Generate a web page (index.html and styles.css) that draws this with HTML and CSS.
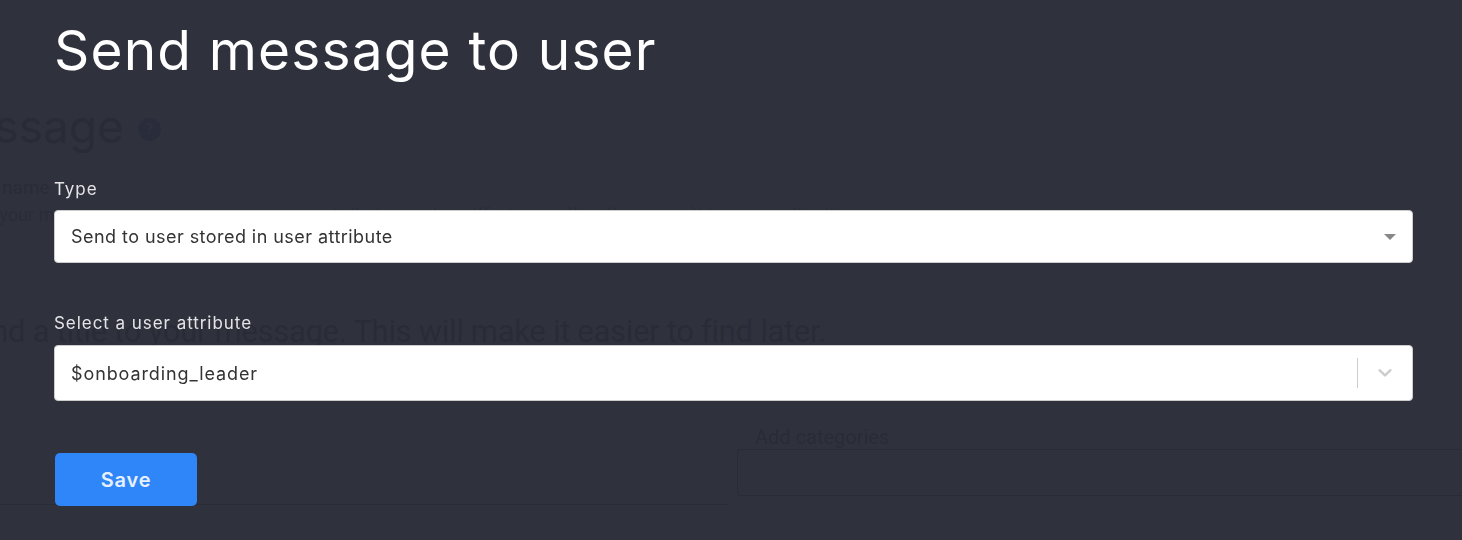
FILE: index.html
```html
<!DOCTYPE html>
<html>
<head>
    <title>Send message to user</title>
    <link rel="stylesheet" href="styles.css">
</head>
<body>
    <div class="page">
        <h2 class="page-title">Message <span class="help-dot">?</span></h2>
        <div class="page-label">Message name</div>
        <div class="page-help">Give your message a name, you can use user attributes such as {{first_name}} or {{company}} to personalise it</div>
        <div class="page-sub">Append a title to your message. This will make it easier to find later.</div>
        <div class="page-columns">
            <div class="page-left"></div>
            <div class="page-right">
                <div class="page-right-label">Add categories</div>
                <div class="page-right-box"></div>
            </div>
        </div>
    </div>

    <div class="modal">
        <div class="dialog">
            <h1>Send message to user</h1>

            <div class="field first">
                <label>Type</label>
                <div class="select">
                    <span class="select-value">Send to user stored in user attribute</span>
                    <span class="caret"></span>
                </div>
            </div>

            <div class="field">
                <label>Select a user attribute</label>
                <div class="select tall">
                    <span class="select-value">$onboarding_leader</span>
                    <span class="indicators">
                        <span class="separator"></span>
                        <svg class="chevron" width="20" height="20" viewBox="0 0 20 20">
                            <path d="M4.5 7.2 L10 12.4 L15.5 7.2" fill="none" stroke="#cccccc" stroke-width="2.4" stroke-linecap="round" stroke-linejoin="round"/>
                        </svg>
                    </span>
                </div>
            </div>

            <button class="save">Save</button>
        </div>
    </div>
</body>
</html>
```

FILE: styles.css
```css
body {
    margin: 0;
    background-color: #ffffff;
    font-family: Inter, "Noto Sans", sans-serif;
    overflow: hidden;
    height: 540px;
}

/* page behind the modal */
.page {
    color: #000000;
    font-family: Roboto, "Liberation Sans", sans-serif;
}

.page-title {
    margin: 0 0 0 -74px;
    padding-top: 98px;
    font-family: Inter, sans-serif;
    font-size: 46px;
    font-weight: 400;
    line-height: 56px;
    display: flex;
    align-items: center;
    gap: 14px;
}

.help-dot {
    width: 23px;
    height: 23px;
    border-radius: 50%;
    background-color: #24478f;
    color: #ffffff;
    font-size: 15px;
    display: flex;
    align-items: center;
    justify-content: center;
    margin-top: 6px;
}

.page-label {
    margin: 22px 0 0 -80px;
    font-size: 19px;
    line-height: 24px;
}

.page-help {
    margin: 4px 0 0 -40px;
    font-size: 18px;
    line-height: 22px;
    color: #333333;
}

.page-sub {
    margin: 88px 0 0 -79px;
    font-size: 31px;
    line-height: 36px;
    letter-spacing: -0.3px;
}

.page-columns {
    display: grid;
    grid-template-columns: 727px 1fr;
    gap: 10px;
    margin-top: 76px;
}

.page-left {
    height: 78px;
    border-bottom: 1px solid #000000;
}

.page-right-label {
    padding-left: 18px;
    font-size: 20px;
    line-height: 22px;
}

.page-right-box {
    margin-top: 1px;
    height: 45px;
    border: 1px solid #000000;
    border-right: none;
    border-radius: 4px 0 0 4px;
}

/* modal */
.modal {
    position: fixed;
    top: 0;
    left: 0;
    right: 0;
    bottom: 0;
    background-color: rgba(42, 44, 56, 0.978);
}

.dialog {
    padding: 18px 0 0 54px;
    width: 1359px;
}

h1 {
    margin: 0;
    color: #ffffff;
    font-size: 55px;
    font-weight: 400;
    line-height: 65px;
    letter-spacing: 1.15px;
}

.field {
    margin-top: 48px;
}

.field.first {
    margin-top: 94px;
}

label {
    display: block;
    color: #e4e4e7;
    font-size: 17px;
    line-height: 24px;
    letter-spacing: 0.95px;
    margin-bottom: 9px;
}

.field + .field label {
    margin-bottom: 10px;
}

.select {
    box-sizing: border-box;
    height: 53px;
    background-color: #ffffff;
    border: 1px solid #cccccc;
    border-radius: 4px;
    display: flex;
    align-items: center;
    justify-content: space-between;
    padding: 0 16px;
    color: #333333;
    font-size: 18px;
    letter-spacing: 0.45px;
}

.select.tall {
    height: 56px;
    padding-right: 0;
}

.select.tall .select-value {
    letter-spacing: 0.9px;
}

.caret {
    width: 0;
    height: 0;
    border-left: 6px solid transparent;
    border-right: 6px solid transparent;
    border-top: 6px solid #888888;
    margin-top: 1px;
}

.indicators {
    display: flex;
    align-items: center;
    height: 100%;
}

.separator {
    width: 1px;
    height: 30px;
    background-color: #cccccc;
}

.chevron {
    display: block;
    padding: 0 17px;
}

.save {
    margin: 52px 0 0 1px;
    width: 142px;
    height: 53px;
    border: none;
    border-radius: 5px;
    background-color: #2f86f8;
    color: #e6f0ff;
    font-family: Inter, sans-serif;
    font-size: 20px;
    font-weight: 600;
    letter-spacing: 0.8px;
    cursor: pointer;
}
```
